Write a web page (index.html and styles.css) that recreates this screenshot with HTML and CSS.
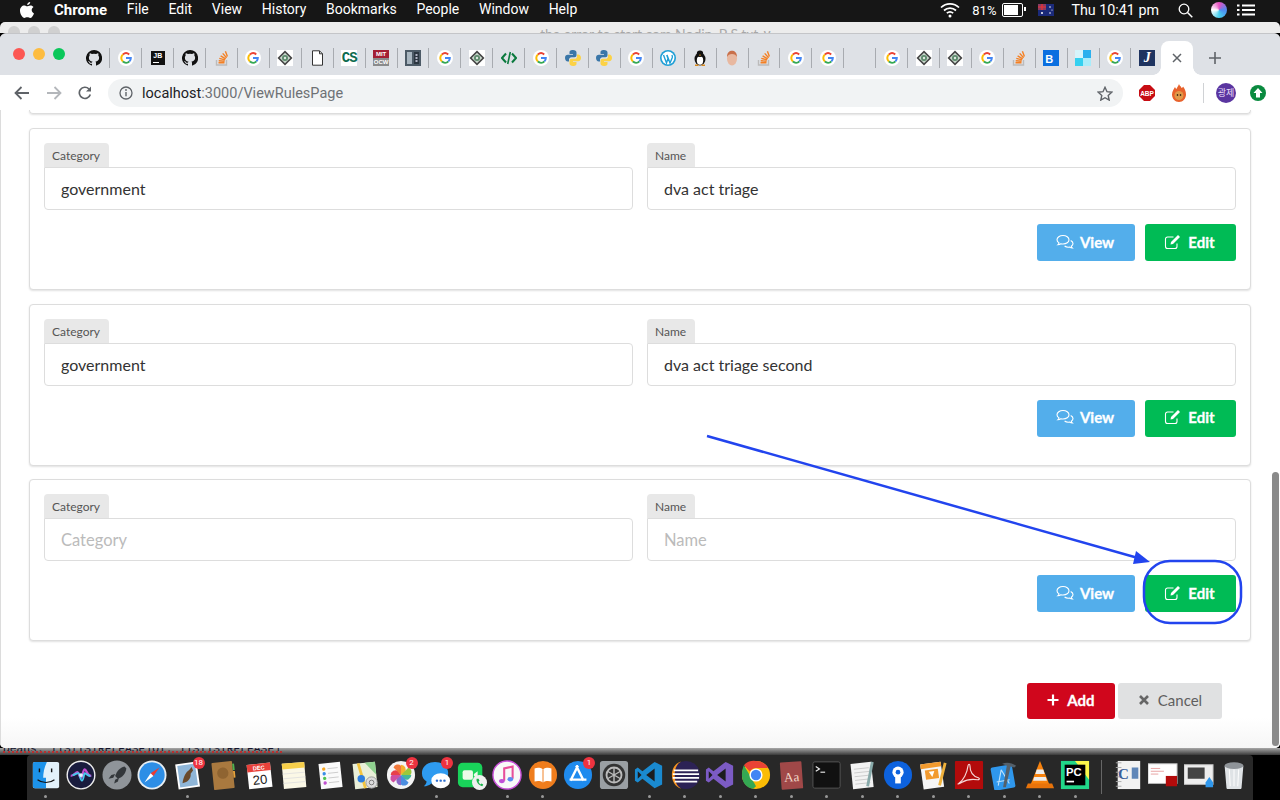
FILE: index.html
```html
<!DOCTYPE html>
<html lang="en">
<head>
  <meta charset="UTF-8">
  <title>ViewRulesPage</title>
  <link rel="stylesheet" href="styles.css">
</head>
<body>
  <svg class="defs" width="0" height="0">
    <symbol id="g" viewBox="0 0 16 16">
      <circle cx="8" cy="8" r="8" fill="#fff"/>
      <path d="M4.9 4.4A4.8 4.8 0 0 1 11.200 4.400" fill="none" stroke="#ea4335" stroke-width="2"/>
      <path d="M4.9 4.4a4.8 4.8 0 0 0 0 7.2" fill="none" stroke="#fbbc05" stroke-width="2"/>
      <path d="M4.9 11.6a4.8 4.8 0 0 0 6.5-.2" fill="none" stroke="#34a853" stroke-width="2"/>
      <path d="M8 8h4.8a4.8 4.8 0 0 1-1.4 3.4" fill="none" stroke="#4285f4" stroke-width="2"/>
    </symbol>
    <symbol id="gh" viewBox="0 0 16 16">
      <path fill="#111" d="M8 0a8 8 0 0 0-2.5 15.6c.4.1.5-.2.5-.4v-1.400c-2.200.5-2.700-1-2.700-1-.4-.9-.9-1.200-.9-1.200-.7-.5.1-.5.1-.5.8.1 1.200.8 1.200.8.7 1.200 1.900.9 2.300.7.100-.5.300-.9.500-1.100-1.800-.2-3.600-.9-3.600-4 0-.9.300-1.600.800-2.100-.1-.2-.4-1 .1-2.100 0 0 .7-.2 2.200.8a7.600 7.600 0 0 1 4 0c1.500-1 2.200-.8 2.200-.8.400 1.100.200 1.900.100 2.100.500.600.800 1.300.800 2.100 0 3.100-1.900 3.800-3.700 4 .300.300.600.800.600 1.500v2.200c0 .2.100.5.600.4A8 8 0 0 0 8 0z"/>
    </symbol>
    <symbol id="so" viewBox="0 0 16 16">
      <path d="M2.500 10v5h10v-5" fill="none" stroke="#bcbbbb" stroke-width="1.400"/>
      <path d="M4.500 12.800h6M4.700 10.700l5.900.6M5.300 8.300l5.700 1.600M6.600 5.800l5.100 3M8.700 3.400l3.900 4.300M11.400 1.200l2 5.400" fill="none" stroke="#f48024" stroke-width="1.400"/>
    </symbol>
    <symbol id="dia" viewBox="0 0 16 16">
      <rect width="16" height="16" fill="#fff"/>
      <path d="M8 .5L15.500 8 8 15.500.5 8z" fill="#444"/>
      <path d="M8 2.700L13.300 8 8 13.300 2.700 8z" fill="#c9d8cc"/>
      <circle cx="8" cy="8" r="3" fill="#5d8a6c"/>
      <circle cx="8" cy="8" r="1.200" fill="#dfe9e1"/>
    </symbol>
    <symbol id="py" viewBox="0 0 16 16">
      <path fill="#3a76a8" d="M8 0C5 0 4.500 1.200 4.500 2.500V4H8v.8H2.800C1.200 4.800 0 6 0 8s1.200 3.400 2.800 3.400H4V9.600c0-1.400 1.100-2.400 2.500-2.400h3c1.200 0 2-.9 2-2V2.500C11.500 1 10.200 0 8 0z"/>
      <path fill="#fcd246" d="M8 16c3 0 3.500-1.200 3.500-2.500V12H8v-.8h5.200c1.600 0 2.800-1.200 2.800-3.200s-1.200-3.400-2.800-3.400H12v1.800c0 1.400-1.100 2.400-2.500 2.400h-3c-1.200 0-2 .9-2 2v2.700C4.500 15 5.800 16 8 16z"/>
    </symbol>
    <symbol id="pencil" viewBox="0 0 18 16">
      <path d="M13 9.500v3a2 2 0 0 1-2 2H3.500a2 2 0 0 1-2-2V5a2 2 0 0 1 2-2h6" fill="none" stroke="#fff" stroke-width="1.100"/>
      <path d="M6.500 10.500l.5-2.500 7-7 2 2-7 7z" fill="#fff"/>
    </symbol>
    <symbol id="chat" viewBox="0 0 18 16">
      <path d="M7 1.500c-3.300 0-6 1.800-6 4.200 0 1.300.8 2.400 2 3.200-.2.800-.6 1.400-1.200 1.900 1.200 0 2.300-.4 3.100-1 .7.100 1.400.2 2.100.2 3.300 0 6-1.900 6-4.300S10.300 1.500 7 1.500z" fill="none" stroke="#fff" stroke-width="1.100"/>
      <path d="M14.700 6.500c1.300.7 2.300 1.800 2.300 3.100 0 1.100-.7 2-1.700 2.700.1.700.5 1.300 1 1.700-1 0-2-.4-2.700-.9-2 .4-3.800-.1-5-1.100" fill="none" stroke="#fff" stroke-width="1.100"/>
    </symbol>
  </svg>

  <!-- menu bar -->
  <header class="menubar">
    <svg class="apple" width="14" height="17" viewBox="0 0 14 17"><path fill="#fff" d="M10.200 0c.1 1.200-1.200 3-3 3C7 1.500 8.600.1 10.200 0zM7.100 4.300c.8 0 1.800-.9 3.300-.9 1.300 0 2.500.7 3.100 1.700-2.600 1.500-2.200 5.200.5 6.300-.7 1.900-2.300 4.600-3.800 4.600-1 0-1.500-.7-2.900-.7s-2 .7-2.900.7C2.500 16 0 12.100 0 8.800c0-3.300 2.200-5.300 4.200-5.300 1.300 0 2.200.8 2.900.8z"/></svg>
    <nav class="menus">
      <b>Chrome</b><span>File</span><span>Edit</span><span>View</span><span>History</span><span>Bookmarks</span><span>People</span><span>Window</span><span>Help</span>
    </nav>
    <div class="status">
      <svg width="20" height="16" viewBox="0 0 20 16"><path d="M1 5.500a13 13 0 0 1 18 0M4 8.500a9 9 0 0 1 12 0M6.800 11.200a5 5 0 0 1 6.400 0" fill="none" stroke="#fff" stroke-width="1.700"/><circle cx="10" cy="14" r="1.500" fill="#fff"/></svg>
      <span class="pct">81%</span>
      <span class="battery"><i></i></span>
      <svg class="flag" width="16" height="12" viewBox="0 0 16 12"><rect width="16" height="12" fill="#1b2a7a"/><rect width="8" height="6" fill="#8a3b62"/><path d="M0 3h8M4 0v6" stroke="#e33" stroke-width="1.200"/><circle cx="4" cy="9" r="1" fill="#fff"/><circle cx="12" cy="3" r=".8" fill="#fff"/><circle cx="12" cy="9" r=".8" fill="#fff"/><circle cx="14" cy="6" r=".6" fill="#fff"/></svg>
      <span class="clock">Thu 10:41 pm</span>
      <svg class="lens" width="15" height="15" viewBox="0 0 15 15"><circle cx="6" cy="6" r="4.800" fill="none" stroke="#fff" stroke-width="1.300"/><path d="M9.500 9.500L14.300 14.300" stroke="#fff" stroke-width="1.500"/></svg>
      <span class="siri"></span>
      <svg class="lines" width="18" height="12" viewBox="0 0 18 12"><path d="M5 1.500h13M5 6h13M5 10.500h13M0 1.500h2.500M0 6h2.500M0 10.500h2.500" stroke="#fff" stroke-width="2"/></svg>
    </div>
  </header>

  <!-- window sitting behind chrome -->
  <div class="back-window">
    <i></i><i></i><i></i>
    <span class="back-title">the error to start.com Nodin_P S.txt ∨</span>
  </div>

  <div class="browser">
    <div class="tabbar">
      <div class="lights"><i class="red"></i><i class="amber"></i><i class="green"></i></div>
      <div class="tab"><svg><use href="#gh"/></svg></div>
      <div class="tab"><svg><use href="#g"/></svg></div>
      <div class="tab"><span class="fav-jb">JB</span></div>
      <div class="tab"><svg><use href="#gh"/></svg></div>
      <div class="tab"><svg><use href="#so"/></svg></div>
      <div class="tab"><svg><use href="#g"/></svg></div>
      <div class="tab"><svg><use href="#dia"/></svg></div>
      <div class="tab"><svg viewBox="0 0 16 16"><path d="M3.500.8h7l3 3v11.400h-10z" fill="#fff" stroke="#333"/><path d="M10.500.8v3h3" fill="none" stroke="#333"/></svg></div>
      <div class="tab"><span class="fav-cs">CS</span></div>
      <div class="tab"><span class="fav-mit"><b>MIT</b><em>OCW</em></span></div>
      <div class="tab"><svg viewBox="0 0 16 16"><rect width="16" height="16" fill="#4c5a66"/><rect x="2" y="2" width="5" height="12" fill="#a9b6c0"/><rect x="9" y="2" width="5" height="12" fill="#2b3640"/><path d="M10.500 5h2M10.500 8h2M10.500 11h2" stroke="#dde" stroke-width="1.400"/></svg></div>
      <div class="tab"><svg><use href="#g"/></svg></div>
      <div class="tab"><svg><use href="#dia"/></svg></div>
      <div class="tab"><svg viewBox="0 0 16 16"><path d="M5 3.500L1 8l4 4.500M11 3.500L15 8l-4 4.500" fill="none" stroke="#0b7a3e" stroke-width="2"/><path d="M9.300 2L6.700 14" stroke="#0b7a3e" stroke-width="1.600"/></svg></div>
      <div class="tab"><svg><use href="#g"/></svg></div>
      <div class="tab"><svg><use href="#py"/></svg></div>
      <div class="tab"><svg><use href="#py"/></svg></div>
      <div class="tab"><svg><use href="#g"/></svg></div>
      <div class="tab"><svg viewBox="0 0 16 16"><circle cx="8" cy="8" r="8" fill="#1f9fd6"/><circle cx="8" cy="8" r="6.400" fill="#fff"/><path d="M3.500 5l3 8 1.500-4.500L6.700 5M7 5l3 8 2.300-5.500c.3-1 0-1.800-.4-2.500" fill="none" stroke="#1f9fd6" stroke-width="1.400"/></svg></div>
      <div class="tab"><svg viewBox="0 0 16 16"><ellipse cx="8" cy="9" rx="5.500" ry="6.500" fill="#111"/><ellipse cx="8" cy="10.500" rx="3.200" ry="4.200" fill="#fff"/><circle cx="8" cy="3.800" r="3.200" fill="#111"/><path d="M6.800 4.800h2.400L8 6z" fill="#f5a623"/><path d="M3 15.200h3.500M9.500 15.200H13" stroke="#d98a1f" stroke-width="1.400"/></svg></div>
      <div class="tab"><svg viewBox="0 0 16 16"><ellipse cx="8" cy="8.500" rx="5" ry="7" fill="#e8b8a0"/><path d="M3 7C3 2.500 5.500 .8 8 .8s5 1.700 5 6.200c-1-2-2.500-3-5-3S4 5 3 7z" fill="#c9704a"/></svg></div>
      <div class="tab"><svg><use href="#so"/></svg></div>
      <div class="tab"><svg><use href="#g"/></svg></div>
      <div class="tab"><svg><use href="#g"/></svg></div>
      <div class="tab"></div>
      <div class="tab"><svg><use href="#g"/></svg></div>
      <div class="tab"><svg><use href="#dia"/></svg></div>
      <div class="tab"><svg><use href="#dia"/></svg></div>
      <div class="tab"><svg><use href="#g"/></svg></div>
      <div class="tab"><svg><use href="#so"/></svg></div>
      <div class="tab"><span class="fav-b">B</span></div>
      <div class="tab"><svg viewBox="0 0 16 16"><rect x="8" width="8" height="8" fill="#2ab0ee"/><rect y="8" width="8" height="8" fill="#35d0f0"/><rect x="8" y="8" width="8" height="8" fill="#a9ecfa"/><rect width="8" height="8" fill="#d6f4fb"/></svg></div>
      <div class="tab"><svg><use href="#g"/></svg></div>
      <div class="tab no-sep"><span class="fav-j">J</span></div>
      <div class="tab-active"><svg width="10" height="10" viewBox="0 0 10 10"><path d="M1 1l8 8M9 1l-8 8" stroke="#5f6368" stroke-width="1.500"/></svg></div>
      <svg class="new-tab" width="12" height="12" viewBox="0 0 12 12"><path d="M6 0v12M0 6h12" stroke="#5f6368" stroke-width="1.600"/></svg>
    </div>

    <div class="toolbar">
      <svg class="nav" width="16" height="14" viewBox="0 0 16 14"><path d="M15 7H2M7.500 1L1.500 7l6 6" fill="none" stroke="#5f6368" stroke-width="1.800"/></svg>
      <svg class="nav" width="16" height="14" viewBox="0 0 16 14"><path d="M1 7h13M8.500 1l6 6-6 6" fill="none" stroke="#b4b7bb" stroke-width="1.800"/></svg>
      <svg class="nav" width="14" height="14" viewBox="0 0 14 14"><path d="M12.300 8.500A5.600 5.600 0 1 1 11 3" fill="none" stroke="#5f6368" stroke-width="1.700"/><path d="M13 .5v5H8z" fill="#5f6368"/></svg>
      <div class="omnibox">
        <svg width="14" height="14" viewBox="0 0 14 14"><circle cx="7" cy="7" r="6" fill="none" stroke="#5f6368" stroke-width="1.300"/><path d="M7 6v4.200" stroke="#5f6368" stroke-width="1.400"/><circle cx="7" cy="4" r=".9" fill="#5f6368"/></svg>
        <span class="url"><b>localhost</b>:3000/ViewRulesPage</span>
        <svg class="star" width="16" height="15" viewBox="0 0 16 15"><path d="M8 1.300l2 4.400 4.800.5-3.600 3.200 1 4.700L8 11.700 3.800 14.100l1-4.700L1.200 6.200 6 5.700z" fill="none" stroke="#5f6368" stroke-width="1.400"/></svg>
      </div>
      <div class="extensions">
        <svg width="16" height="16" viewBox="0 0 16 16"><path d="M5 0h6l5 5v6l-5 5H5l-5-5V5z" fill="#c70d13"/><text x="8" y="10.500" class="abp">ABP</text></svg>
        <svg width="16" height="18" viewBox="0 0 16 18"><path d="M8 0c.5 2 2 2 2.500 4 1-.3 1.500-1 1.500-1.500 1.500 2 3 4.500 3 8 0 4-3 7.500-7 7.500s-7-3.500-7-7.500C1 7 3 5 4 3c.3 1 .8 1.500 1.500 2C6 3 7.500 2 8 0z" fill="#e8622c"/><circle cx="8" cy="11.500" r="4.500" fill="#e09a4a"/><circle cx="6.500" cy="11" r=".8"/><circle cx="9.500" cy="11" r=".8"/></svg>
        <span class="ext-sep"></span>
        <span class="avatar">광제</span>
        <svg width="16" height="16" viewBox="0 0 16 16"><circle cx="8" cy="8" r="8" fill="#0a8a3f"/><path d="M8 3l4.500 5H10v4.500H6V8H3.500z" fill="#fff"/></svg>
      </div>
    </div>

    <main class="page">
      <div class="card-stub"></div>

      <section class="card">
        <div class="fields">
          <div class="field"><label>Category</label><input type="text" value="government" placeholder="Category"></div>
          <div class="field"><label>Name</label><input type="text" value="dva act triage" placeholder="Name"></div>
        </div>
        <div class="actions">
          <button class="btn btn-view"><svg><use href="#chat"/></svg>View</button>
          <button class="btn btn-edit"><svg><use href="#pencil"/></svg>Edit</button>
        </div>
      </section>

      <section class="card">
        <div class="fields">
          <div class="field"><label>Category</label><input type="text" value="government" placeholder="Category"></div>
          <div class="field"><label>Name</label><input type="text" value="dva act triage second" placeholder="Name"></div>
        </div>
        <div class="actions">
          <button class="btn btn-view"><svg><use href="#chat"/></svg>View</button>
          <button class="btn btn-edit"><svg><use href="#pencil"/></svg>Edit</button>
        </div>
      </section>

      <section class="card">
        <div class="fields">
          <div class="field"><label>Category</label><input type="text" placeholder="Category"></div>
          <div class="field"><label>Name</label><input type="text" placeholder="Name"></div>
        </div>
        <div class="actions">
          <button class="btn btn-view"><svg><use href="#chat"/></svg>View</button>
          <button class="btn btn-edit"><svg><use href="#pencil"/></svg>Edit</button>
        </div>
      </section>

      <div class="form-actions">
        <button class="btn btn-add"><svg viewBox="0 0 12 12"><path d="M6 .5v11M.5 6h11" stroke="#fff" stroke-width="2.200"/></svg>Add</button>
        <button class="btn btn-cancel"><svg viewBox="0 0 12 12"><path d="M2 2l8 8M10 2l-8 8" stroke="#666" stroke-width="2.600"/></svg>Cancel</button>
      </div>

      <div class="scrollbar"></div>

      <!-- annotation drawn on top of the screenshot -->
      <svg class="markup" width="1280" height="638" viewBox="0 110 1280 638">
        <path d="M707 436L1138 558" stroke="#2244ee" stroke-width="2.500"/>
        <path d="M1150 562l-14-11-3 13z" fill="#2244ee"/>
        <rect x="1144" y="561" width="97" height="62" rx="26" fill="none" stroke="#2244ee" stroke-width="2.500"/>
      </svg>
    </main>
  </div>

  <div class="desktop"><span>Deans: ITSTISTRELEASE]QT: ITSTISTRELEASE]</span></div>

  <footer class="dock">
    <div class="dock-item on"><svg viewBox="0 0 32 32"><rect x="2" y="2" width="28" height="28" rx="2" fill="#e3f2fb"/><path d="M2 4a2 2 0 0 1 2-2h13c-3 6-4 12-4 17h3v11H4a2 2 0 0 1-2-2z" fill="#1d93ea"/><path d="M9 9v4M22 9v4" stroke="#111" stroke-width="1.500"/><path d="M7 21c5 4 13 4 18 0" fill="none" stroke="#111" stroke-width="1.200"/></svg></div>
    <div class="dock-item"><svg viewBox="0 0 32 32"><circle cx="16" cy="16" r="15.500" fill="#eee"/><circle cx="16" cy="16" r="14" fill="#191c3e"/><path d="M5 17c4 0 5-4 7-4s2 6 4 6 2-9 4-9 2 7 7 7" fill="none" stroke="#c24fd0" stroke-width="2.400"/><path d="M7 16c3 0 4-2 6-2s2 8 4 8 2-8 3-8 3 3 6 3" fill="none" stroke="#46c8ee" stroke-width="2"/><circle cx="16" cy="16" r="2" fill="#dff6ff"/></svg></div>
    <div class="dock-item"><svg viewBox="0 0 32 32"><circle cx="16" cy="16" r="15.500" fill="#8f9499"/><path d="M24 7c-5 1-8 5-10 10l3 3c5-2 8-5 9-11z" fill="#33373b"/><path d="M14 15l-4 1-3 4 5-1M18 19l-1 4-4 2 1-4" fill="#33373b"/></svg></div>
    <div class="dock-item"><svg viewBox="0 0 32 32"><circle cx="16" cy="16" r="15.500" fill="#e8eef2"/><circle cx="16" cy="16" r="13.500" fill="#2d8ee6"/><path d="M24 8l-9.500 6 3 3z" fill="#ee3b30"/><path d="M8 24l6.500-10 3 3z" fill="#fff"/></svg></div>
    <div class="dock-item on"><svg viewBox="0 0 32 32"><g transform="rotate(-8 16 16)"><rect x="4" y="3" width="23" height="27" fill="#fff"/><rect x="6" y="5" width="19" height="23" fill="#8fb6d8"/><path d="M9 24c2-7 5-11 9-13l3-3 1 4-3 3c0 4-3 7-6 8z" fill="#6a4a2c"/></g></svg><span class="badge">18</span></div>
    <div class="dock-item"><svg viewBox="0 0 32 32"><g transform="rotate(-6 16 16)"><rect x="5" y="2" width="22" height="29" rx="1" fill="#a9793f"/><rect x="27" y="5" width="2" height="7" fill="#4fb24f"/><rect x="27" y="13" width="2" height="7" fill="#e8a23a"/><circle cx="16" cy="14" r="6" fill="#8f6431"/></g></svg></div>
    <div class="dock-item"><svg viewBox="0 0 32 32"><g transform="rotate(-6 16 16)"><rect x="4" y="4" width="25" height="26" fill="#fff"/><rect x="4" y="4" width="25" height="8" fill="#e8413a"/><text x="16.500" y="10.500" class="cal-mon">DEC</text><text x="16.500" y="26" class="cal-day">20</text></g></svg></div>
    <div class="dock-item"><svg viewBox="0 0 32 32"><g transform="rotate(-5 16 16)"><rect x="4" y="3" width="24" height="27" fill="#fbf8e6"/><rect x="4" y="3" width="24" height="6" fill="#f7cf4a"/><path d="M4 14h24M4 19h24M4 24h24" stroke="#ddd" stroke-width=".8"/></g></svg></div>
    <div class="dock-item"><svg viewBox="0 0 32 32"><g transform="rotate(-6 16 16)"><rect x="5" y="3" width="23" height="27" fill="#fafafa"/><circle cx="10" cy="9" r="1.800" fill="#f5a623"/><circle cx="10" cy="14" r="1.800" fill="#3a8ee6"/><circle cx="10" cy="19" r="1.800" fill="#4fc34f"/><circle cx="10" cy="24" r="1.800" fill="#c04fd0"/><path d="M14 9h11M14 14h11M14 19h11M14 24h11" stroke="#ccc"/></g></svg></div>
    <div class="dock-item"><svg viewBox="0 0 32 32"><g transform="rotate(-6 16 16)"><rect x="4" y="3" width="24" height="27" fill="#e9efd8"/><path d="M17 3h11v14z" fill="#8fd18f"/><path d="M10 3l5 27" stroke="#f3c53f" stroke-width="3"/></g><circle cx="12" cy="20" r="4" fill="#2d7fe0"/><circle cx="23" cy="24" r="6" fill="#ddd" stroke="#999"/><circle cx="23" cy="24" r="2.500" fill="none" stroke="#777"/></svg></div>
    <div class="dock-item"><svg viewBox="0 0 32 32"><circle cx="16" cy="16" r="15" fill="#f4f4f4"/><path d="M16 16V5a5 5 0 0 1 4 8z" fill="#f5b02e"/><path d="M16 16l8-8a5 5 0 0 1 2 8z" fill="#9bc83c"/><path d="M16 16h11a5 5 0 0 1-8 4z" fill="#42b89a"/><path d="M16 16l8 8a5 5 0 0 1-8 2z" fill="#4a8de0"/><path d="M16 16v11a5 5 0 0 1-4-8z" fill="#8a68c8"/><path d="M16 16l-8 8a5 5 0 0 1-2-8z" fill="#d04fa0"/><path d="M16 16H5a5 5 0 0 1 8-4z" fill="#e8414a"/><path d="M16 16L8 8a5 5 0 0 1 8-2z" fill="#f0783a"/></svg><span class="badge">2</span></div>
    <div class="dock-item on"><svg viewBox="0 0 32 32"><path d="M15 2C7 2 1 7 1 14c0 4 2 7 5 9-.3 2-1.500 4-3 5 3 0 6-1 8-3 1.300.3 2.700.5 4 .5 8 0 14-5 14-11.500S23 2 15 2z" fill="#2e9bf0"/><ellipse cx="21" cy="22" rx="10" ry="8" fill="#fff"/><circle cx="17" cy="22" r="1.300" fill="#2e6fd0"/><circle cx="21" cy="22" r="1.300" fill="#2e6fd0"/><circle cx="25" cy="22" r="1.300" fill="#2e6fd0"/></svg><span class="badge">1</span></div>
    <div class="dock-item"><svg viewBox="0 0 32 32"><rect x="1" y="3" width="26" height="26" rx="5" fill="#19d35a"/><rect x="6" y="11" width="11" height="10" rx="2" fill="#eafbe8"/><path d="M18 15l4-3v8l-4-3z" fill="#eafbe8"/><circle cx="24" cy="24" r="8" fill="#f0f0f0"/><path d="M21 20c-1 3 2 7 6 8l1-2-2-1-1 1c-1-.5-2-2-2-3l1-1-1-2z" fill="#19b34a"/></svg></div>
    <div class="dock-item on"><svg viewBox="0 0 32 32"><circle cx="16" cy="16" r="15" fill="#f8f8f8"/><circle cx="16" cy="16" r="15" fill="none" stroke="#c84fd8" stroke-width="1.500"/><path d="M13 22V9l9-2v13" fill="none" stroke="#e84f9a" stroke-width="2.200"/><ellipse cx="10.500" cy="22.500" rx="3" ry="2.300" fill="#c04fd8"/><ellipse cx="19.500" cy="20.500" rx="3" ry="2.300" fill="#5f8af0"/></svg></div>
    <div class="dock-item on"><svg viewBox="0 0 32 32"><circle cx="16" cy="16" r="15" fill="#ef7d1d"/><path d="M16 10c-3-2-6-2-9-1v14c3-1 6-1 9 1 3-2 6-2 9-1V9c-3-1-6-1-9 1z" fill="#fff"/><path d="M16 10v14" stroke="#ef7d1d"/></svg></div>
    <div class="dock-item"><svg viewBox="0 0 32 32"><circle cx="16" cy="16" r="15" fill="#1f8bee"/><path d="M16 6l-8 16M14 6l8 16M7 21h18" stroke="#fff" stroke-width="2.400"/></svg><span class="badge">1</span></div>
    <div class="dock-item"><svg viewBox="0 0 32 32"><rect x="1" y="1" width="30" height="30" rx="3" fill="#9a9fa3"/><circle cx="16" cy="16" r="12" fill="#333"/><circle cx="16" cy="16" r="8" fill="none" stroke="#bbb" stroke-width="2"/><path d="M16 8v16M9 12l14 8M23 12L9 20" stroke="#bbb" stroke-width="1.500"/></svg></div>
    <div class="dock-item on"><svg viewBox="0 0 32 32"><path d="M22 2l8 4v20l-8 4-13-10-5 4-3-2V10l3-2 5 4z" fill="#1a8ad0"/><path d="M22 9v14l-9-7z" fill="#1c1c1e"/><path d="M4 12l4 4-4 4z" fill="#1c1c1e"/></svg></div>
    <div class="dock-item on"><svg viewBox="0 0 32 32"><circle cx="17" cy="16" r="15" fill="#2c2255"/><path d="M12 1.500C6 3 2 9 2 16s4 13 10 14.500C7 28 5 22 5 16S7 4 12 1.500z" fill="#f7941e"/><path d="M4 11h26M3 15h28M3 19h28M5 23h24" stroke="#fff" stroke-width="1.800"/></svg></div>
    <div class="dock-item on"><svg viewBox="0 0 32 32"><path d="M22 2l8 4v20l-8 4-13-10-5 4-3-2V10l3-2 5 4z" fill="#7c5bc4"/><path d="M22 9v14l-9-7z" fill="#1c1c1e"/><path d="M4 12l4 4-4 4z" fill="#1c1c1e"/></svg></div>
    <div class="dock-item on"><svg viewBox="0 0 32 32"><circle cx="16" cy="16" r="15" fill="#fbbc05"/><path d="M16 1a15 15 0 0 1 13 7.500H16a7.500 7.500 0 0 0-6.500 3.800L3 5.500A15 15 0 0 1 16 1z" fill="#ea4335"/><path d="M3 5.500l6.500 11 6.500 11.500L13 30.700C5 30 1 23 1 16c0-4 .8-7.500 2-10.500z" fill="#34a853"/><circle cx="16" cy="16" r="7" fill="#fff"/><circle cx="16" cy="16" r="5.500" fill="#4285f4"/></svg></div>
    <div class="dock-item on"><svg viewBox="0 0 32 32"><g transform="rotate(-4 16 16)"><rect x="5" y="2" width="23" height="29" rx="1" fill="#a04848"/><text x="16.500" y="23" class="dict">Aa</text></g></svg></div>
    <div class="dock-item on"><svg viewBox="0 0 32 32"><rect x="1" y="2" width="29" height="28" rx="2" fill="#111" stroke="#555"/><path d="M4 7l4 2.500L4 12" fill="none" stroke="#eee" stroke-width="1.200"/><path d="M9 13h5" stroke="#eee" stroke-width="1.200"/></svg></div>
    <div class="dock-item on"><svg viewBox="0 0 32 32"><g transform="rotate(-6 16 16)"><rect x="5" y="3" width="22" height="27" fill="#f3f3f3"/><path d="M8 9h16M8 13h16M8 17h16M8 21h16M8 25h16" stroke="#ccc"/></g><path d="M27 2l-5 26" stroke="#8aa" stroke-width="3"/></svg></div>
    <div class="dock-item on"><svg viewBox="0 0 32 32"><circle cx="16" cy="16" r="15" fill="#0d62de"/><circle cx="16" cy="13" r="6" fill="#fff"/><circle cx="16" cy="13" r="2.500" fill="#0d62de"/><path d="M13 17h6v8h-6z" fill="#fff"/></svg></div>
    <div class="dock-item on"><svg viewBox="0 0 32 32"><g transform="rotate(-8 16 16)"><rect x="4" y="3" width="22" height="27" fill="#f6f6f6"/><rect x="4" y="3" width="22" height="5" fill="#f29a2e"/><rect x="8" y="10" width="14" height="10" fill="#f29a2e"/><path d="M12 12l6 0-3 6z" fill="#fff"/></g><path d="M29 3l-6 24" stroke="#f0b23c" stroke-width="3"/></svg></div>
    <div class="dock-item on"><svg viewBox="0 0 32 32"><rect x="1" y="1" width="30" height="30" rx="1" fill="#b30b0b"/><path d="M5 25c5-3 9-11 10-19 .3-2 2-2 2 0 0 6 3 11 9 13 2 1 1 2-1 2-6-1-12 0-17 3-3 2-5 2-3 1z" fill="none" stroke="#f5d8d8" stroke-width="1.200"/></svg></div>
    <div class="dock-item on"><svg viewBox="0 0 32 32"><g transform="rotate(-10 16 16)"><rect x="3" y="6" width="23" height="25" rx="2" fill="#2f97ec"/><path d="M14 10l-6 16M14 10l6 16M7 22h14" stroke="#bfe2fb" stroke-width="1.200"/></g><path d="M14 4c5-2 10-1 15 2l-2 2-4-1-5 22h-3l4-23z" fill="#55606a"/></svg></div>
    <div class="dock-item on"><svg viewBox="0 0 32 32"><path d="M16 1l10 25H6z" fill="#f7820d"/><path d="M12.500 10h7l1.500 5h-10zM9.800 18h12.400l1.200 4H8.600z" fill="#eee"/><path d="M3 25h26l2 5H1z" fill="#e8730a"/></svg></div>
    <div class="dock-item on"><svg viewBox="0 0 32 32"><rect x="1" y="1" width="30" height="30" fill="#21d789"/><path d="M31 1v20L16 1z" fill="#fcf84a"/><rect x="5" y="5" width="22" height="22" fill="#000"/><text x="6.500" y="17" class="pc">PC</text><path d="M7 23h8" stroke="#fff" stroke-width="1.800"/></svg></div>
    <span class="dock-sep"></span>
    <div class="dock-item"><svg viewBox="0 0 32 32"><rect x="5" y="1" width="24" height="30" fill="#f2f2f2"/><path d="M3 3h6M3 8h6M3 13h6M3 18h6M3 23h6M3 28h6" stroke="#aaa"/><text x="11" y="20" class="cpp">C</text><rect x="20" y="8" width="7" height="12" fill="#5f86b8"/></svg></div>
    <div class="dock-item"><svg viewBox="0 0 32 32"><rect x="0" y="4" width="31" height="21" fill="#fff" stroke="#bbb"/><path d="M3 9h10M3 12h14M3 15h8" stroke="#e8a0a0"/><rect x="19" y="17" width="12" height="11" fill="#b30b0b"/></svg></div>
    <div class="dock-item"><svg viewBox="0 0 32 32"><rect x="0" y="5" width="31" height="21" fill="#eee" stroke="#bbb"/><rect x="4" y="8" width="18" height="12" fill="#444"/><path d="M23 24l4-6 4 6v5h-8z" fill="#2f97ec"/></svg></div>
    <div class="dock-item"><svg viewBox="0 0 32 32"><path d="M6 6h20l-2 24a2 2 0 0 1-2 1H10a2 2 0 0 1-2-1z" fill="#dfe3e6"/><ellipse cx="16" cy="6" rx="10" ry="3.500" fill="#8f9499"/><path d="M11 10l1 18M16 10v18M21 10l-1 18" stroke="#fff"/></svg></div>
  </footer>
</body>
</html>
```

FILE: styles.css
```css
html, body {
  margin: 0;
  padding: 0;
  height: 800px;
  overflow: hidden;
  background-color: #000;
  font-family: 'Lato', sans-serif;
}

.defs {
  display: block;
  height: 0;
}

/* menu bar */
.menubar {
  height: 22px;
  background-color: #161616;
  color: #fff;
  display: flex;
  align-items: center;
  font-family: 'Roboto', sans-serif;
  font-size: 14px;
  padding: 0 25px 2px 20px;
  box-sizing: border-box;
}

.apple {
  margin-right: 20px;
}

.menus {
  display: flex;
  gap: 19.7px;
}

.menus b {
  font-size: 15px;
}

.status {
  margin-left: auto;
  display: flex;
  align-items: center;
}

.pct {
  margin-left: 12px;
  font-size: 13px;
}

.battery {
  width: 17px;
  height: 10px;
  border: 1px solid #fff;
  border-radius: 2px;
  padding: 1px;
  margin-left: 6px;
  display: block;
  position: relative;
}

.battery::after {
  content: '';
  position: absolute;
  right: -4px;
  top: 3px;
  width: 2px;
  height: 4px;
  background-color: #fff;
}

.battery i {
  display: block;
  width: 81%;
  height: 100%;
  background-color: #fff;
}

.flag {
  margin-left: 15px;
}

.clock {
  margin-left: 17px;
  font-size: 14.3px;
}

.lens {
  margin-left: 19px;
}

.siri {
  width: 16px;
  height: 16px;
  border-radius: 50%;
  margin-left: 18px;
  background: conic-gradient(#e84fc0, #4f8af0, #46d0ee, #fff, #e84fc0);
}

.lines {
  margin-left: 10px;
}

/* the window behind chrome */
.back-window {
  height: 11px;
  background-color: #ececec;
  border-radius: 5px 5px 0 0;
  display: flex;
  gap: 8px;
  padding: 4px 0 0 8px;
  box-sizing: border-box;
  overflow: hidden;
}

.back-window i {
  width: 12px;
  height: 12px;
  border-radius: 50%;
  background-color: #d0d0d0;
}

.back-title {
  margin-left: 472px;
  font-size: 14px;
  line-height: 16px;
  color: #a8a8a8;
  white-space: nowrap;
}

/* chrome */
.browser {
  border-radius: 6px 6px 5px 5px;
  overflow: hidden;
  height: 715px;
  display: flex;
  flex-direction: column;
  background-color: #fff;
  border-top: 1px solid #c4c5c8;
  box-sizing: border-box;
}

.tabbar {
  height: 41px;
  flex: none;
  background-color: #dee1e6;
  display: flex;
  align-items: center;
  padding-top: 7px;
  box-sizing: border-box;
}

.lights {
  width: 78.5px;
  flex: none;
  display: flex;
  gap: 8px;
  padding-left: 13px;
  box-sizing: border-box;
  margin-top: -8px;
}

.lights i {
  width: 12px;
  height: 12px;
  border-radius: 50%;
}

.red { background-color: #fc5753; }
.amber { background-color: #fdbc40; }
.green { background-color: #0ac75a; }

.tab {
  width: 31.92px;
  height: 20px;
  flex: none;
  box-sizing: border-box;
  border-right: 1px solid #a8abb0;
  display: flex;
  align-items: center;
  justify-content: center;
}

.no-sep {
  border-right: none;
}

.tab svg {
  width: 16px;
  height: 16px;
}

.fav-jb {
  width: 14px;
  height: 14px;
  background: linear-gradient(#fff, #fff) 2px 11px / 6px 1px no-repeat, #111;
  color: #fff;
  font: bold 7px/10px 'Liberation Sans', sans-serif;
  text-align: center;
}

.fav-cs {
  width: 16px;
  height: 16px;
  background-color: #fff;
  color: #0c6b4f;
  font: bold 14px/16px 'Liberation Mono', monospace;
  text-align: center;
  letter-spacing: -1px;
}

.fav-mit {
  width: 16px;
  height: 16px;
  display: flex;
  flex-direction: column;
  font-family: 'Liberation Sans', sans-serif;
  font-size: 6px;
  line-height: 8px;
  text-align: center;
  color: #fff;
  font-weight: bold;
}

.fav-mit b {
  background-color: #a31f34;
}

.fav-mit em {
  background-color: #8a8b8c;
  font-style: normal;
}

.fav-b {
  width: 16px;
  height: 16px;
  background-color: #0a6fe0;
  color: #fff;
  font: bold 11px/19px 'Liberation Sans', sans-serif;
  padding-left: 2px;
  box-sizing: border-box;
}

.fav-j {
  width: 16px;
  height: 16px;
  background-color: #1f3460;
  color: #fff;
  font: italic bold 14px/16px 'Liberation Serif', serif;
  text-align: center;
}

.tab-active {
  width: 32px;
  height: 34px;
  margin-left: -2px;
  align-self: flex-start;
  flex: none;
  background-color: #fff;
  border-radius: 8px 8px 0 0;
  display: flex;
  align-items: center;
  justify-content: center;
  position: relative;
}

/* the little flares at the foot of the active tab */
.tab-active::before,
.tab-active::after {
  content: '';
  position: absolute;
  bottom: 0;
  width: 8px;
  height: 8px;
}

.tab-active::before {
  left: -8px;
  background: radial-gradient(circle at 0 0, transparent 7.5px, #fff 8px);
}

.tab-active::after {
  right: -8px;
  background: radial-gradient(circle at 100% 0, transparent 7.5px, #fff 8px);
}

.new-tab {
  margin-left: 16px;
}

.toolbar {
  height: 35px;
  flex: none;
  display: flex;
  align-items: center;
  padding: 1px 0 0 14px;
  box-sizing: border-box;
  background-color: #fff;
}

.nav {
  margin-right: 16px;
  flex: none;
}

.omnibox {
  width: 1015px;
  height: 28px;
  flex: none;
  background-color: #f1f3f4;
  border-radius: 14px;
  display: flex;
  align-items: center;
  padding: 0 10px 0 11px;
  box-sizing: border-box;
}

.url {
  margin-left: 9px;
  font-family: 'Roboto', sans-serif;
  font-size: 14.5px;
  color: #6e7175;
}

.url b {
  font-weight: normal;
  color: #202124;
}

.star {
  margin-left: auto;
}

.extensions {
  display: flex;
  align-items: center;
  margin-left: 16px;
}

.extensions svg:nth-child(2) {
  margin-left: 16px;
}

.abp {
  font: bold 6.5px 'Liberation Sans', sans-serif;
  fill: #fff;
  text-anchor: middle;
}

.ext-sep {
  width: 1px;
  height: 20px;
  background-color: #d0d2d5;
  margin: 0 12px 0 16px;
}

.avatar {
  width: 20px;
  height: 20px;
  border-radius: 50%;
  background-color: #5a35a0;
  color: #e8ddf8;
  font: 9px/20px 'Noto Sans CJK KR', sans-serif;
  text-align: center;
  margin-right: 14px;
}

/* page */
.page {
  flex: 1;
  min-height: 0;
  background: linear-gradient(#fff 608px, #f6f6f6);
  padding: 0 29px;
  position: relative;
  overflow: hidden;
  border-left: 1px solid #dcdcdc;
}

.card-stub {
  height: 3px;
  margin: 0 0 14px -1px;
  border: 1px solid #ddd;
  border-top: none;
  border-radius: 0 0 4px 4px;
  box-shadow: 0 1px 2px rgba(0, 0, 0, 0.12);
}

.card {
  margin: 0 0 13.7px -1px;
  padding: 14px 14px 28px;
  background-color: #fff;
  border: 1px solid #ddd;
  border-radius: 4px;
  box-shadow: 0 1px 2px rgba(0, 0, 0, 0.12);
}

.fields {
  display: grid;
  grid-template-columns: 1fr 1fr;
  gap: 14px;
}

.field label {
  display: block;
  width: fit-content;
  height: 24px;
  padding: 0 8.5px 0 8px;
  box-sizing: border-box;
  background-color: #e8e8e8;
  border-radius: 4px 4px 0 0;
  color: #555;
  font-size: 12px;
  line-height: 25px;
}

.field input {
  display: block;
  width: 100%;
  height: 43px;
  padding: 0 16px;
  box-sizing: border-box;
  border: 1px solid #ddd;
  border-radius: 0 4px 4px 4px;
  font-family: 'Lato', sans-serif;
  font-size: 16px;
  color: #333;
  outline: none;
}

.field input::placeholder {
  color: #bbb;
  font-size: 16.5px;
}

.actions {
  display: flex;
  justify-content: flex-end;
  gap: 10px;
  margin-top: 14px;
}

.btn {
  height: 37px;
  padding: 0 2px 2px 0;
  border: none;
  border-radius: 3px;
  color: #fff;
  font-family: 'Lato', sans-serif;
  font-size: 15px;
  font-weight: bold;
  -webkit-text-stroke: 0.3px;
  display: flex;
  align-items: center;
  justify-content: center;
}

.btn svg {
  width: 18px;
  height: 16px;
  margin-right: 6px;
}

.btn-view {
  width: 98px;
  background-color: #53aeeb;
}

.btn-edit {
  width: 91px;
  background-color: #00bb55;
}

.form-actions {
  display: flex;
  justify-content: flex-end;
  gap: 3px;
  margin-top: 42px;
  padding-right: 29px;
}

.form-actions .btn {
  height: 36px;
  padding-right: 0;
}

.form-actions .btn svg {
  width: 12px;
  height: 12px;
  margin-right: 8px;
}

.btn-add {
  width: 88px;
  background-color: #d0061c;
}

.btn-cancel {
  width: 104px;
  background-color: #e0e1e2;
  color: #5f5f5f;
  font-weight: normal;
  -webkit-text-stroke: 0;
}

.scrollbar {
  position: absolute;
  top: 362px;
  right: 1px;
  width: 7px;
  height: 274px;
  border-radius: 4px;
  background-color: #8a8a8a;
}

.markup {
  position: absolute;
  top: 0;
  left: -1px;
}

/* bit of desktop between window and dock */
.desktop {
  height: 7px;
  background: linear-gradient(#a8a8a8, #3a3a3a);
  color: #14142c;
  font: 11.3px/2px 'Liberation Mono', monospace;
  overflow: hidden;
  white-space: nowrap;
}

.desktop span {
  display: block;
  width: 279px;
  height: 3px;
  margin-left: 3px;
  overflow: hidden;
  border-bottom: 2px dotted #b83030;
}

/* dock */
.dock {
  width: 1226px;
  height: 45px;
  margin-left: 27px;
  padding-left: 1px;
  box-sizing: border-box;
  background-color: #282828;
  border-radius: 4px 4px 0 0;
  display: flex;
  align-items: flex-start;
}

.dock-item {
  width: 35.5px;
  height: 45px;
  flex: none;
  position: relative;
  display: flex;
  justify-content: center;
  padding-top: 5px;
  box-sizing: border-box;
}

.dock-item svg {
  width: 30px;
  height: 30px;
}

.dock-item.on::after {
  content: '';
  position: absolute;
  left: 16px;
  bottom: 2px;
  width: 3px;
  height: 3px;
  border-radius: 50%;
  background-color: #999;
}

.badge {
  position: absolute;
  top: 2px;
  right: 1px;
  min-width: 12px;
  height: 12px;
  border-radius: 6px;
  background-color: #ee3340;
  color: #fff;
  font: 8px/12px 'Roboto', sans-serif;
  text-align: center;
}

.dock-sep {
  width: 1px;
  height: 34px;
  margin: 5px 8px 0;
  flex: none;
  background-color: #666;
}

.cal-mon, .cal-day, .dict, .cpp {
  text-anchor: middle;
}

.cal-mon {
  font: bold 6px 'Liberation Sans', sans-serif;
  fill: #fff;
}

.cal-day {
  font: 14px 'Liberation Sans', sans-serif;
  fill: #222;
}

.dict {
  font: 14px 'Liberation Serif', serif;
  fill: #f2d8c8;
}

.pc {
  font: bold 12px 'Liberation Sans', sans-serif;
  fill: #fff;
}

.cpp {
  font: bold 16px 'Liberation Serif', serif;
  fill: #3a5f9a;
}
```
